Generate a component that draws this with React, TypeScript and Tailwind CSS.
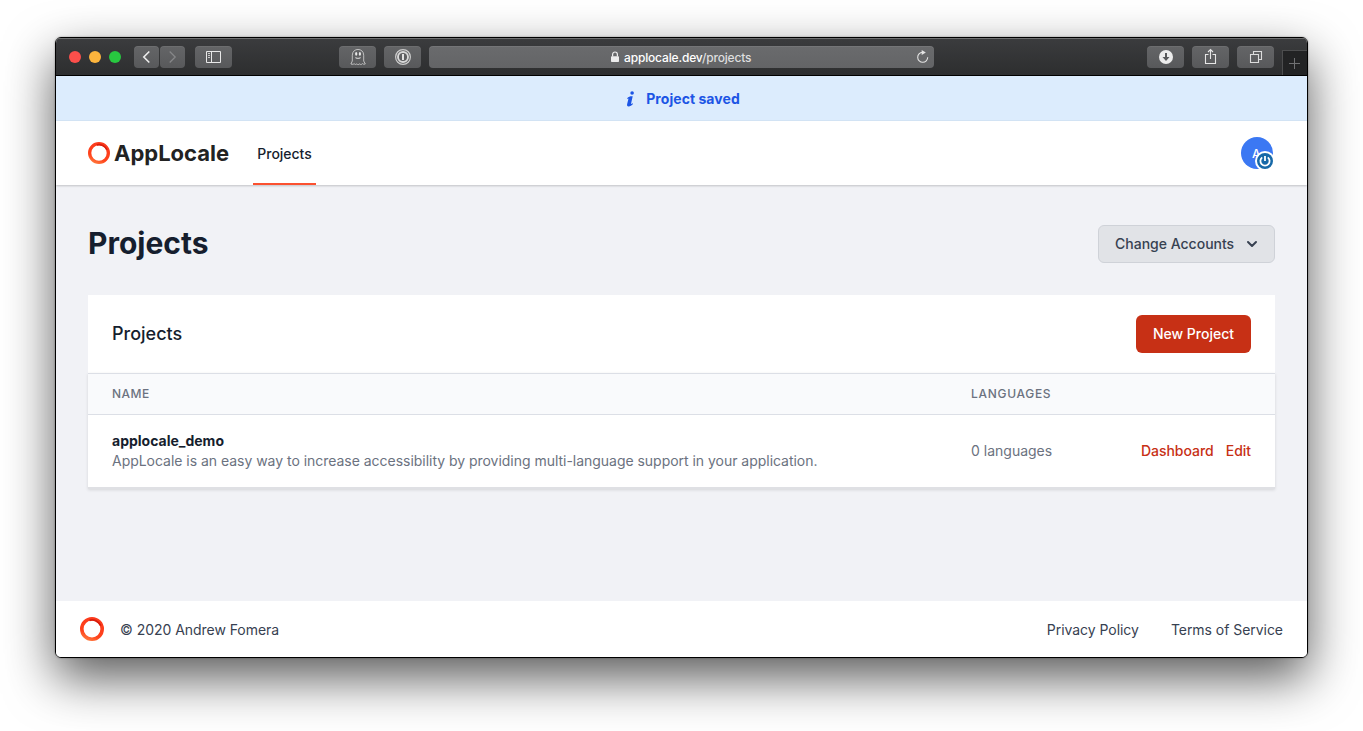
import type { ReactNode } from 'react';

function Ring({ size, id }: { size: number; id: string }) {
  return (
    <svg width={size} height={size} viewBox="0 0 24 24" fill="none" className="shrink-0">
      <defs>
        <linearGradient id={id} x1="6" y1="23" x2="15" y2="1" gradientUnits="userSpaceOnUse">
          <stop offset="0" stopColor="#ff7a3d" />
          <stop offset="0.3" stopColor="#ff431c" />
          <stop offset="1" stopColor="#fb3a1c" />
        </linearGradient>
      </defs>
      <circle cx="12" cy="12" r="10.2" stroke={`url(#${id})`} strokeWidth="3.6" />
      <path d="M9.500 3.300C14 2 18.700 4.400 20.800 8.600" stroke="#d91d0c" strokeWidth="1.800" />
    </svg>
  );
}

function ToolButton({ className = 'w-[37px]', children }: { className?: string; children: ReactNode }) {
  return (
    <div
      className={`flex h-[22px] shrink-0 items-center justify-center rounded bg-linear-to-b from-[#646567] to-[#58595b] shadow-[inset_0_1px_0_rgba(255,255,255,0.06)] ${className}`}
    >
      {children}
    </div>
  );
}

function Toolbar() {
  return (
    <div className="flex h-[38px] shrink-0 items-center border-b border-black bg-linear-to-b from-[#3b3c3e] to-[#2d2e2f] pl-[13px] shadow-[inset_0_1px_0_#6f7071]">
      <div className="flex gap-2">
        <span className="size-3 rounded-full bg-[#fc4f4b]" />
        <span className="size-3 rounded-full bg-[#fdb53d]" />
        <span className="size-3 rounded-full bg-[#28c840]" />
      </div>
      <div className="ml-[13px] flex gap-px">
        <ToolButton className="w-[25px]">
          <svg width="25" height="22" fill="none" stroke="#ececec" strokeWidth="1.6">
            <path d="M15.3 5.500 9.800 11l5.500 5.500" />
          </svg>
        </ToolButton>
        <ToolButton className="w-[25px]">
          <svg width="25" height="22" fill="none" stroke="#858688" strokeWidth="1.3">
            <path d="M9.700 5.500 15.200 11l-5.500 5.500" />
          </svg>
        </ToolButton>
      </div>
      <ToolButton className="ml-2.5 w-[37px]">
        <svg width="37" height="22" fill="none" stroke="#e8e8e8">
          <path d="M11.500 5.500h14v11h-14zM16.500 5.500v11" />
          <path d="M13 7.500h2M13 9.500h2M13 11.500h2" strokeWidth="0.8" />
        </svg>
      </ToolButton>
      <ToolButton className="ml-[107px] w-[37px]">
        <svg width="37" height="22" fill="none" stroke="#c9c9ca" strokeWidth="0.9">
          <path d="M13.300 15V9.200c0-7.700 11.400-7.700 11.400 0V15l1.600 3c-1.500.6-2.300 0-2.800-.4-1 1-2 1.300-2.700.2-1 1-2.300 1-3 0-.8 1-1.800.8-2.700-.2-.5.600-1.300 1-3.200.4z" />
          <path d="M16.500 11.300c1 1.500 4 1.500 5 0" strokeWidth="1.200" />
          <ellipse cx="17.200" cy="7.900" rx="1.100" ry="1.800" fill="#e8e8e8" stroke="none" />
          <ellipse cx="20.900" cy="7.900" rx="1.100" ry="1.800" fill="#e8e8e8" stroke="none" />
        </svg>
      </ToolButton>
      <ToolButton className="ml-2 w-[37px]">
        <svg width="37" height="22" fill="none">
          <circle cx="19" cy="11" r="7.400" stroke="#cdcdcd" strokeWidth="1.200" />
          <circle cx="19" cy="11" r="5" stroke="#d8d8d8" strokeWidth="1.900" />
          <path d="M19 8v6" stroke="#e2e2e2" strokeWidth="2" />
        </svg>
      </ToolButton>
      <div className="ml-2 flex h-[22px] w-[505px] shrink-0 items-center rounded bg-linear-to-b from-[#6a6b6d] to-[#636466] pl-[182px] pr-[5px] shadow-[inset_0_1px_0_rgba(255,255,255,0.08)]">
        <svg width="8" height="12" viewBox="0 0 8 12" className="shrink-0">
          <rect x="0" y="5.200" width="8" height="5.800" rx="0.800" fill="#ececec" />
          <path d="M1.600 5.500V3.600c0-3.500 4.800-3.500 4.800 0v1.900" fill="none" stroke="#ececec" strokeWidth="1.200" />
        </svg>
        <span className="ml-[5px] whitespace-nowrap pt-0.5 text-[12px] leading-5 font-medium tracking-[-0.16px] text-white">
          applocale.dev<span className="text-[#dededf]">/projects</span>
        </span>
        <svg width="13" height="14" viewBox="0 0 13 14" fill="none" className="ml-auto shrink-0">
          <path d="M6.500 2.300A5 5 0 1 0 11.700 7.300" stroke="#e4e4e4" strokeWidth="1.100" />
          <path d="M5.700 0 9.800 2.600 5.700 5z" fill="#e4e4e4" />
        </svg>
      </div>
      <ToolButton className="ml-[213px] w-[37px]">
        <svg width="37" height="22" fill="none">
          <circle cx="19" cy="11" r="7" fill="#ececec" />
          <path d="M19 7v6" stroke="#58595b" strokeWidth="2" />
          <path d="M15.500 11h7L19 15z" fill="#58595b" />
        </svg>
      </ToolButton>
      <ToolButton className="ml-2 w-[37px]">
        <svg width="37" height="22" fill="none" stroke="#e6e6e6" strokeWidth="1.100">
          <path d="M16.500 8.500h-3v9h10v-9h-3M18.500 13V3.800M16 6l2.500-2.500L21 6" />
        </svg>
      </ToolButton>
      <ToolButton className="ml-2 w-[37px]">
        <svg width="37" height="22" fill="none" stroke="#dcdcdc" strokeWidth="1.100">
          <path d="M13.500 8.500h8v8h-8zM16.500 8V5.500h8v8H22" />
        </svg>
      </ToolButton>
      <div className="ml-2 flex h-[25px] w-[25px] shrink-0 items-center self-end border-l border-t border-[#4c4d4e] bg-[#222324] pl-1.5">
        <svg width="11" height="11" fill="none" stroke="#707173">
          <path d="M5.500 0v11M0 5.500h11" />
        </svg>
      </div>
    </div>
  );
}

function Banner() {
  return (
    <div className="flex h-[45px] shrink-0 items-center justify-center border-b border-[#d5e6f7] bg-[#dcecfd] pt-0.5 pl-[3px] text-sm font-bold text-[#1c55e5]">
      <svg width="9" height="16" viewBox="0 0 9 16" className="mr-[11px]" fill="#1c55e5">
        <circle cx="6.100" cy="2" r="1.800" />
        <path d="M1.200 7.300C2.500 5.700 4 5.200 5.700 5.200h1L5.100 12.600c-.1.500.3.400 1.700-.4l.2.700C5.600 14.500 4 15.500 2.500 15.400c-1.200-.1-1.700-.9-1.400-2.200L2.500 7.600l-1.100.4z" />
      </svg>
      <span className="leading-5 tracking-[0.05px]">Project saved</span>
    </div>
  );
}

function Header() {
  return (
    <header className="z-10 flex h-16 shrink-0 items-stretch bg-white pr-[34px] pl-8 shadow-[0_1px_2px_rgba(0,0,0,0.2)]">
      <div className="flex items-center">
        <Ring size={22} id="ring-header" />
        <span className="ml-1 w-[115px] whitespace-nowrap text-[22px] leading-7 font-bold text-[#222]">AppLocale</span>
      </div>
      <div className="ml-6 flex w-[63px] items-center justify-center border-b-2 border-[#fb5130] pt-[3px] text-sm font-medium tracking-[-0.03px] text-[#161e2e]">
        Projects
      </div>
      <div className="relative ml-auto size-8 self-center rounded-full bg-[#3b78f3]">
        <span className="absolute left-[11px] top-[9px] text-xs leading-4 font-medium text-white">A</span>
        <svg width="20" height="20" viewBox="0 0 20 20" fill="none" className="absolute left-[14px] top-[14px]">
          <circle cx="10" cy="10" r="10" fill="#fff" />
          <circle cx="10" cy="10" r="8" fill="#1769a8" />
          <path d="M7.200 6.400A4.600 4.600 0 1 0 12.800 6.400" stroke="#fff" strokeWidth="1.800" />
          <path d="M10 5v5" stroke="#fff" strokeWidth="1.800" />
        </svg>
      </div>
    </header>
  );
}

function ProjectsCard() {
  return (
    <section className="mt-8">
      <div className="flex h-[78px] items-center justify-between bg-white px-6">
        <h2 className="text-lg leading-6 font-medium text-[#161e2e]">Projects</h2>
        <button className="h-[38px] w-[115px] rounded-md bg-[#c73015] text-sm font-medium text-white">New Project</button>
      </div>
      <div className="border-b-2 border-[#dfe0e4] shadow-[0_1px_3px_rgba(0,0,0,0.12)]">
        <div className="flex h-[42px] items-center border-y border-[#dcdfe6] bg-[#f9fafc] px-6 text-xs leading-4 font-medium text-[#6b7280]">
          <span className="w-[859px] tracking-[0.5px]">NAME</span>
          <span className="tracking-[0.7px]">LANGUAGES</span>
        </div>
        <div className="flex h-[72px] items-center bg-white px-6 text-sm leading-5">
          <div className="w-[859px]">
            <div className="font-bold text-[#161e2e]">applocale_demo</div>
            <div className="tracking-[-0.028px] text-[#6b7280]">
              AppLocale is an easy way to increase accessibility by providing multi-language support in your application.
            </div>
          </div>
          <span className="text-[#6b7280]">0 languages</span>
          <div className="ml-auto flex gap-3 font-medium tracking-[-0.03px] text-[#c73015]">
            <a>Dashboard</a>
            <a>Edit</a>
          </div>
        </div>
      </div>
    </section>
  );
}

export default function App() {
  return (
    <div className="h-[731px] w-[1363px] overflow-hidden bg-white pt-[37px] pl-[55px] font-['Inter',sans-serif]">
      <div className="rounded-md h-[621px] w-[1253px] shadow-[0_20px_50px_rgba(0,0,0,0.65),0_0_2px_rgba(0,0,0,0.4)]">
        <div className="flex h-full flex-col overflow-hidden rounded-md border border-black bg-[#f1f2f6]">
          <Toolbar />
          <Banner />
          <Header />
          <main className="flex-1 pr-8 pl-8 pt-10">
            <div className="flex h-[38px] items-center justify-between">
              <h1 className="pb-0.5 text-[30px] leading-9 font-bold text-[#161e2e]">Projects</h1>
              <button className="flex h-[38px] w-[177px] items-center justify-between rounded-md border border-[#cfd2d8] bg-[#e1e3e7] pr-4 pl-4 text-sm font-medium text-[#374151]">
                Change Accounts
                <svg width="12" height="8" viewBox="0 0 12 8" fill="none" stroke="#374151" strokeWidth="2" strokeLinecap="round" strokeLinejoin="round">
                  <path d="M2 2l4 4 4-4" />
                </svg>
              </button>
            </div>
            <ProjectsCard />
          </main>
          <footer className="flex h-14 shrink-0 items-center bg-white px-6 text-sm tracking-[-0.04px] text-[#374151]">
            <Ring size={24} id="ring-footer" />
            <span className="ml-4 pt-0.5">© 2020 Andrew Fomera</span>
            <div className="ml-auto flex gap-8 pt-0.5">
              <a>Privacy Policy</a>
              <a>Terms of Service</a>
            </div>
          </footer>
        </div>
      </div>
    </div>
  );
}
